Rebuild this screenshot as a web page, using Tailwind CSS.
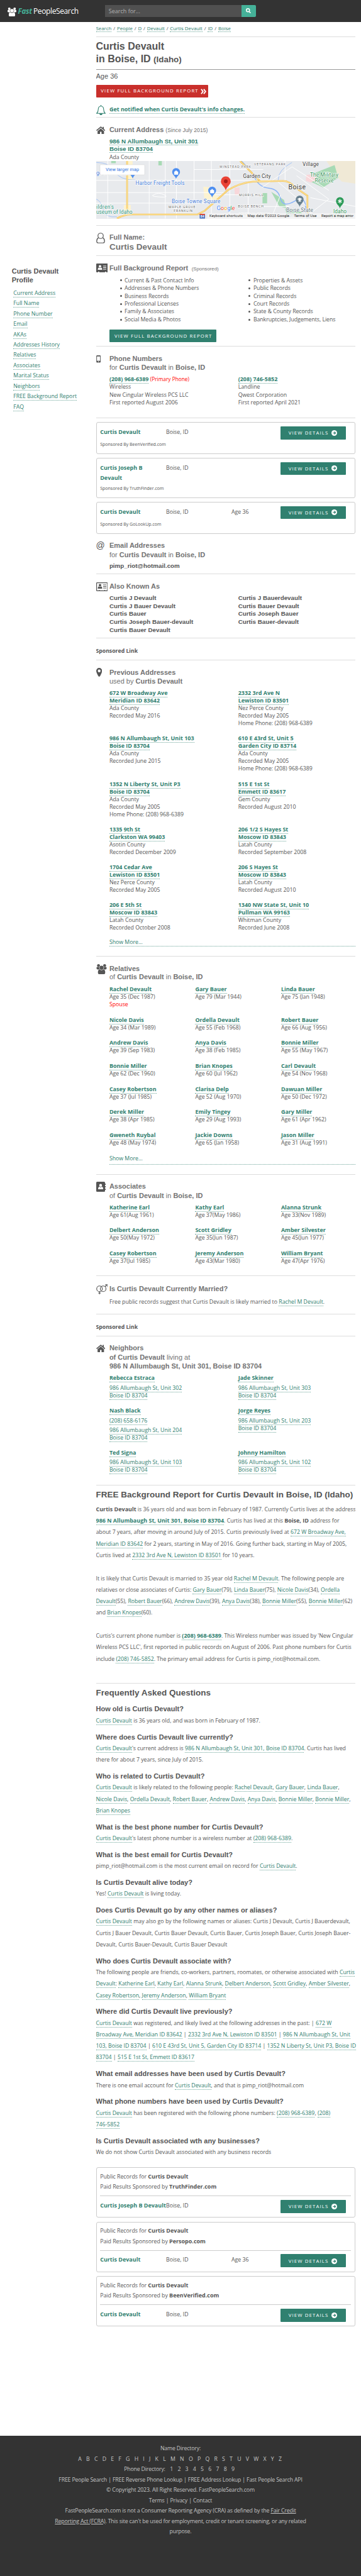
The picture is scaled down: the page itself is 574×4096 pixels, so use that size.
<!DOCTYPE html>
<html lang="en">
<head>
<meta charset="utf-8">
<title>Curtis Devault in Boise, ID (Idaho)</title>
<script src="https://cdn.jsdelivr.net/npm/@tailwindcss/browser@4"></script>
</head>
<body class="bg-white h-[4096px] overflow-hidden font-['Open_Sans','Noto_Sans',sans-serif] text-[8.75px] leading-[12px] text-[#555] whitespace-nowrap [&_b]:text-[8.970px]">
<svg class="hidden">
  <symbol id="arrow" viewBox="0 0 18 18"><circle cx="9" cy="9" r="9" fill="#fff"/><path d="M4.5 9h8M9 5l4 4-4 4" fill="none" stroke="#30806f" stroke-width="2.4"/></symbol>
  <symbol id="house" viewBox="0 0 24 20"><path d="M12 0 0 10l1.6 2L12 3.400 22.400 12 24 10l-4-3.400V1h-3v3.200zM12 5.200 3.500 12.200V20H10v-6h4v6h6.500v-7.800z" fill="#555"/></symbol>
  <symbol id="people" viewBox="0 0 28 28"><circle cx="5.500" cy="4" r="4"/><circle cx="22.500" cy="4" r="4"/><path d="M0 10q0-2 2-2h4q1.500 0 1.800 1.500Q7 13 9 15H3q-3 0-3-3zM28 10q0-2-2-2h-4q-1.500 0-1.800 1.500Q21 13 19 15h6q3 0 3-3z"/><circle cx="14" cy="10" r="5.600"/><path d="M4 25q-1-8 4-10.500Q11 17 14 17t6-2.500q5 2.500 4 10.500 0 3-3 3H7q-3 0-3-3z"/></symbol>
</svg>

<header class="h-[34.750px] bg-[#333] flex items-start">
  <div class="flex w-[167.300px] pl-[12px] pt-[11px]">
    <svg class="w-[14px] h-[14px] mt-[1px] fill-white"><use href="#people"/></svg>
    <span class="ml-[2.500px] w-[24.500px] text-[11.500px] leading-[14px] tracking-[-0.2px] font-bold italic text-[#45b198]">Fast</span>
    <span class="text-[12px] leading-[14px] tracking-[-0.380px] text-white">PeopleSearch</span>
  </div>
  <div class="mt-[8px] flex">
    <div class="w-[216.500px] h-[18.800px] bg-[#505050] pl-[5.500px] text-[9px] leading-[19px] text-[#b0b0b0]">Search for...</div>
    <div class="w-[23px] h-[18.800px] bg-[#45b198] rounded-r-[2px] flex items-center justify-center">
      <svg class="w-[8px] h-[8px]" viewBox="0 0 16 16" fill="none" stroke="#fff" stroke-width="3"><circle cx="6.500" cy="6.500" r="5"/><path d="m10 10.500 5 5"/></svg>
    </div>
  </div>
</header>

<div class="flex h-[3838.650px] [&_a]:text-[#30806f] [&_a]:border-b [&_a]:border-dotted [&_a]:border-[#30806f]/70">
<aside class="w-[152.500px] shrink-0 pl-[18.700px] pt-[389.500px]">
  <h3 class="font-['Liberation_Sans'] font-bold text-[11px] leading-[14.200px]">Curtis Devault<br>Profile</h3>
  <nav class="mt-[5.100px] pl-[2.600px] leading-[16.460px]">
    <div><a>Current Address</a></div><div><a>Full Name</a></div><div><a>Phone Number</a></div><div><a>Email</a></div><div><a>AKAs</a></div><div><a>Addresses History</a></div><div><a>Relatives</a></div><div><a>Associates</a></div><div><a>Marital Status</a></div><div><a>Neighbors</a></div><div><a>FREE Background Report</a></div><div><a>FAQ</a></div>
  </nav>
</aside>

<main class="w-[412.400px] shrink-0 [&_h2]:font-['Liberation_Sans'] [&_h2]:font-bold [&_h2]:text-[11px] [&_h2]:text-[#737373] [&>section]:border-b [&>section]:border-[#ddd] [&>section]:overflow-hidden">
  <section class="h-[23.850px] pt-[5.500px] text-[7.850px] leading-[10px] flex gap-[2.850px]"><span><a>Search</a></span><span>/</span><span><a>People</a></span><span>/</span><span><a>D</a></span><span>/</span><span><a>Devault</a></span><span>/</span><span><a>Curtis Devault</a></span><span>/</span><span><a>ID</a></span><span>/</span><span><a>Boise</a></span></section>

  <div class="h-[52.400px] pt-[5.200px] border-b border-[#999]">
    <h1 class="font-['Liberation_Sans'] font-bold text-[16px] leading-[20.450px]">Curtis Devault<br>in Boise, ID <span class="text-[13.400px]">(Idaho)</span></h1>
  </div>

  <section class="h-[75.700px] pt-[3.500px]">
    <div class="font-['Liberation_Sans'] text-[11px] leading-[14px]">Age 36</div>
    <div class="mt-[7px] w-[178.600px] h-[19.700px] pl-[7.800px] bg-[#c92f2b] rounded-[1px] text-white text-[7.800px] leading-[19.700px] tracking-[1.140px] flex items-center"><span class="w-[158.500px]">VIEW FULL BACKGROUND REPORT</span>
      <svg class="w-[9px] h-[9px]" viewBox="0 0 18 18" fill="none" stroke="#fff" stroke-width="4"><path d="m2 1.500 5.500 7.500L2 16.500M10 1.500 15.500 9 10 16.500"/></svg></div>
    <div class="mt-[12.300px] flex">
      <svg class="w-[15px] h-[16px] mr-[6.400px]" viewBox="0 0 30 32" fill="none" stroke="#30806f" stroke-width="2.200"><path d="M15 3.500c-6 0-8.500 4.500-8.500 10 0 8-1.500 9.500-5 13h27c-3.500-3.500-5-5-5-13 0-5.500-2.500-10-8.500-10zM15 0v4"/><path d="M11 28q4 6 8 0z" fill="#30806f"/></svg>
      <b class="leading-[14px]"><a>Get notified when Curtis Devault's info changes.</a></b>
    </div>
  </section>

  <section class="h-[172.500px] pt-[12.200px]">
    <div class="flex">
      <svg class="w-[14.500px] h-[12.200px] mt-[1.700px] mr-[6.900px]"><use href="#house"/></svg>
      <div class="h-[57.300px]">
        <h2 class="h-[14px] leading-[14px]">Current Address <span class="font-normal text-[8.700px]">(Since July 2015)</span></h2>
        <div class="mt-[6.350px] font-['Liberation_Sans'] font-bold text-[9.800px] leading-[11.900px]"><a>986 N Allumbaugh St, Unit 301</a><br><a>Boise ID 83704</a></div>
        <div class="mt-[1.200px]">Ada County</div>
      </div>
    </div>
    <svg class="block w-[412.400px] h-[91.500px] font-['Roboto']" viewBox="0 0 412.400 91.500">
      <rect width="413" height="92" fill="#e8eaed"/>
      <g transform="scale(.3662 .2334)" fill="none">
        <path d="M1000 0h126v155l-60-15-30-50z" fill="#f0e9d6"/>
        <path d="M928 95 1035 28 1051 115 985 180 915 130z" fill="#a8dab5"/>
        <path d="M912 95l38-8 10 40-30 20-20-12zM600 185l22-5v45l-20 10z" fill="#f8d7da"/>
        <path d="M722 218h20v70h-20zM760 210l55 55 10 55-30-10zM820 325l60 10 30 45h-80zM65 0h20v15H65zM270 0h15v30h-15z" fill="#a8dab5"/>
        <path d="M130 0h28v130h-25zM465 175l30 5 40 70-30 50-35-30zM120 300h30v70h-30z" fill="#fdf3d0"/>
        <g stroke="#8ab4f8" stroke-width="1.500"><path vector-effect="non-scaling-stroke" d="M630 0q40 60 60 120t60 65 50 70 60 20 50 50 20 67"/><path vector-effect="non-scaling-stroke" stroke-width=".7" d="M0 10q60 0 80 60t90 60M0 260q20 10 30 70t60 50M850 10q-60 50-60 120"/></g>
        <g stroke="#fff" stroke-width="1"><path vector-effect="non-scaling-stroke" d="M0 132h760M0 287h480M425 58h300M50 0v392M230 0v392M300 0v392M348 0v392M425 0v260M500 0v392M580 0v392M660 150v242M0 215h560M250 230q20-20 45 0t-20 15-25-15M500 230h220M620 310h220M720 180 850 40 1010 200M820 0v140M780 130 930 330M870 100 1010 260 900 392M1126 310 930 250M760 392l40-160"/></g>
        <g stroke="#f5c04a" stroke-width="2.600"><path vector-effect="non-scaling-stroke" d="M90 392q30-28 60-28h290l30-24L570 200q50-50 110-60l130-4q30 0 50 40l57 60v130M134 0v362M625 0l85 136"/></g>
        <g stroke="#fff3c4" stroke-width=".9"><path vector-effect="non-scaling-stroke" d="M90 392q30-28 60-28h290l30-24L570 200q50-50 110-60l130-4q30 0 50 40l57 60v130M134 0v362M625 0l85 136"/></g>
      </g>
      <g>
        <g fill="#4f8ff0"><path d="M127 28.800c-1-5-6.200-6.500-6.200-11.300a6.200 6.200 0 0 1 12.400 0c0 4.800-5.200 6.300-6.200 11.300zM184.300 58.300c-1-5-6.200-6.500-6.200-11.300a6.200 6.200 0 0 1 12.400 0c0 4.800-5.200 6.300-6.200 11.300zM58 28c-1-4-4-5-4-8h8c0 3-3 4-4 8z"/></g>
        <path d="M124.200 17h5.800v4.500h-5.800zM181.400 46.500h5.800V51h-5.800zM125.500 17q1.500-3.500 3 0M182.800 46.500q1.500-3.500 3 0" fill="#fff" stroke="#fff" stroke-width=".6"/>
        <path d="M323.500 73c-1-5-6.200-6.500-6.200-11.800a6.200 6.200 0 0 1 12.400 0c0 5.300-5.200 6.800-6.200 11.800z" fill="#68808f"/><path d="m319.500 60.500 4-2 4 2-4 2zM321.500 62.500v2h4v-2" fill="#fff"/>
        <path d="M387.500 75.500c-1-5-6.200-6.500-6.200-11.800a6.200 6.200 0 0 1 12.400 0c0 5.300-5.200 6.800-6.200 11.800z" fill="#2b9a57"/><path d="M387.500 60.500v7M384.500 62.300l6 3.500M390.500 62.300l-6 3.500" stroke="#fff" stroke-width="1.300"/>
        <path d="M206 47c-1.200-7-7.800-8.500-7.800-14.800a7.800 7.800 0 0 1 15.600 0C213.800 38.500 207.200 40 206 47z" fill="#ea4335"/><circle cx="206" cy="32.200" r="3" fill="#a51d18"/>
        <path d="M164.500 84h8.500v7.500h-8.500z" fill="#3f6cc0"/><path d="M164.500 84h8.500v2h-8.500z" fill="#d84a3f"/>
      </g>
      <g stroke="#fff" stroke-width="1.400" paint-order="stroke" stroke-linejoin="round" font-size="8.300">
        <g fill="#3f78d6"><text x="0" y="22">ge at Meridian</text><text x="62.500" y="38" textLength="78">Harbor Freight Tools</text><text x="120" y="67.500" textLength="77.500">Boise Towne Square</text></g>
        <g fill="#1f8f77"><text x="0" y="76" textLength="28">ildren's</text><text x="0" y="84.500" textLength="57.500">useum of Idaho</text></g>
        <g fill="#2f9156"><text x="340" y="25.500" textLength="45">The Military</text><text x="347.500" y="34" textLength="30">Reserve</text><text x="377" y="83.500" textLength="21">Idaho</text><text x="370" y="89.500" font-size="7" textLength="35">Botanical</text></g>
        <g fill="#63737d"><text x="302" y="81.500" textLength="43">Boise State</text><text x="305" y="89" textLength="36">University</text></g>
        <g fill="#333"><text x="328" y="7.500" textLength="26">Village</text><text x="233.500" y="27.500" textLength="44">Garden City</text><text x="305.500" y="45.500" font-size="10.500" textLength="27.500">Boise</text></g>
        <g fill="#666" font-size="5.200"><text x="196" y="11.500" textLength="50">WINSTEAD PARK</text><text x="251" y="7.300" textLength="50">VETERANS PARK</text><text x="227" y="56" textLength="38.500">MORRIS HILL</text><text x="225.500" y="73.600" textLength="40.500">BOISE BENCH</text><text x="226" y="87" textLength="50" fill="#aaa">CENTRAL BENCH</text><text x="115" y="75.500" textLength="42.500">MAPLE GROVE</text><text x="119" y="81" textLength="34">- FRANKLIN</text></g>
        <text x="165.800" y="90.300" font-size="5" fill="#fff" stroke="none" font-weight="700">84</text>
      </g>
      <rect x="6" y="6" width="71" height="16" rx="1" fill="#fff" stroke="#ccc" stroke-width=".4"/>
      <text x="15" y="16.500" font-size="7.300" fill="#2f74e0" textLength="53">View larger map</text>
      <text x="191.500" y="78" font-size="9.500" stroke="#fff" stroke-width="1.200" paint-order="stroke" textLength="29"><tspan fill="#4285f4">G</tspan><tspan fill="#ea4335">o</tspan><tspan fill="#f4b400">o</tspan><tspan fill="#4285f4">g</tspan><tspan fill="#34a853">l</tspan><tspan fill="#ea4335">e</tspan></text>
      <rect x="177" y="83" width="236" height="9" fill="#f5f5f5" fill-opacity=".8"/>
      <g font-size="5.900" fill="#222"><text x="180" y="89.500" textLength="53">Keyboard shortcuts</text><text x="240.500" y="89.500" textLength="66.500">Map data ©2023 Google</text><text x="314.500" y="89.500" textLength="36">Terms of Use</text><text x="358" y="89.500" textLength="51">Report a map error</text></g>
    </svg>
  </section>

  <section class="h-[47.400px] pt-[11.250px] flex">
    <svg class="w-[14px] h-[17px] mr-[7.400px] shrink-0" viewBox="0 0 28 34" fill="none" stroke="#555" stroke-width="2.400"><circle cx="14" cy="10" r="8.500"/><path d="M7.500 15.500Q1.500 19 1.500 27q0 5.500 5 5.500h15q5 0 5-5.500 0-8-6-11.500"/></svg>
    <div><h2 class="leading-[15.900px]">Full Name:</h2><div class="font-['Liberation_Sans'] font-bold text-[13.500px] leading-[14px] text-[#737373]">Curtis Devault</div></div>
  </section>

  <section class="h-[144.600px] pt-[12.600px] flex">
    <svg class="w-[18.500px] h-[14px] mr-[2.900px] shrink-0" viewBox="0 0 37 28"><path d="M2 0h33q2 0 2 2v24q0 2-2 2H32v-2h-4v2H10v-2H6v2H2q-2 0-2-2V2q0-2 2-2z" fill="#555"/><circle cx="12" cy="9" r="4" fill="#fff"/><path d="M5 20q0-7 4-7l3 2 3-2q4 0 4 7zM22 7h10v2H22zM22 12h10v2H22zM22 17h10v2H22z" fill="#fff"/></svg>
    <div class="w-[391px]">
      <h2 class="h-[14px] leading-[14px]">Full Background Report <span class="ml-[2.500px] font-normal text-[7.800px]">(Sponsored)</span></h2>
      <div class="mt-[6.500px] grid grid-cols-[204.800px_1fr] leading-[12.440px] [&_li]:flex [&_li]:items-center [&_li]:before:content-[''] [&_li]:before:w-[3px] [&_li]:before:h-[3px] [&_li]:before:rounded-full [&_li]:before:bg-[#555] [&_li]:before:mr-[4.500px] [&_li]:pl-[16.700px] [&_li]:tracking-[-0.050px]">
        <ul><li>Current &amp; Past Contact Info</li><li>Addresses &amp; Phone Numbers</li><li>Business Records</li><li>Professional Licenses</li><li>Family &amp; Associates</li><li>Social Media &amp; Photos</li></ul>
        <ul><li>Properties &amp; Assets</li><li>Public Records</li><li>Criminal Records</li><li>Court Records</li><li>State &amp; County Records</li><li>Bankruptcies, Judgements, Liens</li></ul>
      </div>
      <div class="mt-[10px] w-[170.400px] h-[20px] pl-[8px] bg-[#30806f] rounded-[1px] text-white text-[7.800px] leading-[20px] tracking-[1.140px]">VIEW FULL BACKGROUND REPORT</div>
    </div>
  </section>

  <section class="h-[114px] pt-[12.200px] flex">
    <svg class="w-[7.300px] h-[11.400px] mt-[2px] mr-[14.100px] shrink-0" viewBox="0 0 14 23"><rect width="14" height="23" rx="2.500" fill="#555"/><path d="M2 3.500h10v14H2z" fill="#fff"/><circle cx="7" cy="20.200" r="1.300" fill="#fff"/></svg>
    <div>
      <h2 class="leading-[14.100px]">Phone Numbers<br><span class="font-normal">for</span> Curtis Devault <span class="font-normal">in</span> Boise, ID</h2>
      <div class="mt-[5.400px] grid grid-cols-[204.800px_1fr] leading-[12.400px]">
        <div><b><a>(208) 968-6389</a></b> <span class="text-[#f00] text-[8.300px] leading-[10px]">(Primary Phone)</span><br>Wireless<br>New Cingular Wireless PCS LLC<br>First reported August 2006</div>
        <div><b><a>(208) 746-5852</a></b><br>Landline<br>Qwest Corporation<br>First reported April 2021</div>
      </div>
    </div>
  </section>

  <div class="mt-[6.300px] h-[50.300px] border border-[#ccc] rounded-[3px] px-[5.700px]">
    <div class="flex h-[28.400px] pt-[6.600px] leading-[16.450px]"><b class="w-[104.800px] text-[#30806f]">Curtis Devault</b><span class="w-[104px]">Boise, ID</span><span class="w-[77.900px]"></span>
      <div class="-mt-[1.200px] w-[103.700px] h-[20.700px] shrink-0 pl-[12.800px] flex items-center bg-[#30806f] rounded-[1px] text-white text-[7.800px] leading-[20.700px] tracking-[1.140px]"><span class="w-[68.200px]">VIEW DETAILS</span><svg class="w-[9px] h-[9px]"><use href="#arrow"/></svg></div></div>
    <div class="text-[7px]">Sponsored By BeenVerified.com</div>
  </div>
  <div class="mt-[6.350px] h-[63.750px] border border-[#ccc] rounded-[3px] px-[5.700px]">
    <div class="flex h-[41.900px] pt-[6.600px] leading-[16.450px]"><b class="w-[104.800px] text-[#30806f]">Curtis Joseph B<br>Devault</b><span class="w-[104px]">Boise, ID</span><span class="w-[77.900px]"></span>
      <div class="-mt-[1.200px] w-[103.700px] h-[20.700px] shrink-0 pl-[12.800px] flex items-center bg-[#30806f] rounded-[1px] text-white text-[7.800px] leading-[20.700px] tracking-[1.140px]"><span class="w-[68.200px]">VIEW DETAILS</span><svg class="w-[9px] h-[9px]"><use href="#arrow"/></svg></div></div>
    <div class="text-[7px]">Sponsored By TruthFinder.com</div>
  </div>
  <div class="mt-[6.400px] h-[50.300px] border border-[#ccc] rounded-[3px] px-[5.700px]">
    <div class="flex h-[28.400px] pt-[6.600px] leading-[16.450px]"><b class="w-[104.800px] text-[#30806f]">Curtis Devault</b><span class="w-[104px]">Boise, ID</span><span class="w-[77.900px]">Age 36</span>
      <div class="-mt-[1.200px] w-[103.700px] h-[20.700px] shrink-0 pl-[12.800px] flex items-center bg-[#30806f] rounded-[1px] text-white text-[7.800px] leading-[20.700px] tracking-[1.140px]"><span class="w-[68.200px]">VIEW DETAILS</span><svg class="w-[9px] h-[9px]"><use href="#arrow"/></svg></div></div>
    <div class="text-[7px]">Sponsored By GoLookUp.com</div>
  </div>

  <section class="h-[64.600px] pt-[11.200px] flex">
    <div class="w-[21.400px] font-['Liberation_Sans'] text-[14px] leading-[15px]">@</div>
    <div><h2 class="leading-[14.900px]">Email Addresses<br><span class="font-normal">for</span> Curtis Devault <span class="font-normal">in</span> Boise, ID</h2>
      <div class="mt-[3.400px] font-['Liberation_Sans'] font-bold text-[9.800px] leading-[14px]">pimp_riot@hotmail.com</div></div>
  </section>

  <section class="h-[102px] pt-[12.300px] flex">
    <svg class="w-[18.500px] h-[14px] mt-[0.500px] mr-[2.900px] shrink-0" viewBox="0 0 37 28"><rect x="1.200" y="1.200" width="34.600" height="25.600" rx="1.500" fill="none" stroke="#555" stroke-width="2.400"/><circle cx="12" cy="9" r="4" fill="#555"/><path d="M5 20q0-7 4-7l3 2 3-2q4 0 4 7zM22 7h10v2H22zM22 12h10v2H22zM22 17h10v2H22zM9 24h2v3H9zM26 24h2v3h-2z" fill="#555"/></svg>
    <div><h2 class="leading-[14px]">Also Known As</h2>
      <div class="mt-[5.400px] grid grid-cols-[204.800px_1fr] font-['Liberation_Sans'] font-bold text-[9.800px] leading-[12.680px]">
        <div>Curtis J Devault<br>Curtis J Bauer Devault<br>Curtis Bauer<br>Curtis Joseph Bauer-devault<br>Curtis Bauer Devault</div>
        <div>Curtis J Bauerdevault<br>Curtis Bauer Devault<br>Curtis Joseph Bauer<br>Curtis Bauer-devault</div>
      </div></div>
  </section>

  <section class="h-[35.200px] pt-[14.200px] font-bold text-[8.700px]">Sponsored Link</section>

  <section class="h-[470.600px] pt-[11.200px] flex">
    <svg class="w-[9.400px] h-[14px] mt-[0.800px] mr-[12px] shrink-0" viewBox="0 0 19 28"><path fill-rule="evenodd" d="M9.500 0A9.300 9.300 0 0 1 19 9.500Q19 14 13 25q-1.500 3-3.500 3T6 25Q0 14 0 9.500A9.300 9.300 0 0 1 9.500 0zm0 5a4.500 4.500 0 1 0 0 9 4.500 4.500 0 0 0 0-9z" fill="#555"/></svg>
    <div class="w-[391px]">
      <h2 class="leading-[14.900px]">Previous Addresses<br><span class="font-normal">used by</span> Curtis Devault</h2>
      <div class="mt-[4.700px] grid grid-cols-[204.800px_1fr] grid-rows-[72.250px_72.250px_72.250px_60.200px_60.200px_59.300px] leading-[12.040px]">
        <div><b><a>672 W Broadway Ave</a><br><a>Meridian ID 83642</a></b><br>Ada County<br>Recorded May 2016</div>
        <div><b><a>2332 3rd Ave N</a><br><a>Lewiston ID 83501</a></b><br>Nez Perce County<br>Recorded May 2005<br>Home Phone: (208) 968-6389</div>
        <div><b><a>986 N Allumbaugh St, Unit 103</a><br><a>Boise ID 83704</a></b><br>Ada County<br>Recorded June 2015</div>
        <div><b><a>610 E 43rd St, Unit 5</a><br><a>Garden City ID 83714</a></b><br>Ada County<br>Recorded May 2005<br>Home Phone: (208) 968-6389</div>
        <div><b><a>1352 N Liberty St, Unit P3</a><br><a>Boise ID 83704</a></b><br>Ada County<br>Recorded May 2005<br>Home Phone: (208) 968-6389</div>
        <div><b><a>515 E 1st St</a><br><a>Emmett ID 83617</a></b><br>Gem County<br>Recorded August 2010</div>
        <div><b><a>1335 9th St</a><br><a>Clarkston WA 99403</a></b><br>Asotin County<br>Recorded December 2009</div>
        <div><b><a>206 1/2 S Hayes St</a><br><a>Moscow ID 83843</a></b><br>Latah County<br>Recorded September 2008</div>
        <div><b><a>1704 Cedar Ave</a><br><a>Lewiston ID 83501</a></b><br>Nez Perce County<br>Recorded May 2005</div>
        <div><b><a>206 S Hayes St</a><br><a>Moscow ID 83843</a></b><br>Latah County<br>Recorded August 2010</div>
        <div><b><a>206 E 5th St</a><br><a>Moscow ID 83843</a></b><br>Latah County<br>Recorded October 2008</div>
        <div><b><a>1340 NW State St, Unit 10</a><br><a>Pullman WA 99163</a></b><br>Whitman County<br>Recorded June 2008</div>
      </div>
      <a class="block h-[12.600px]">Show More...</a>
    </div>
  </section>

  <section class="h-[346.800px] pt-[12.600px] flex">
    <svg class="w-[17px] h-[16px] -mt-[0.500px] mr-[4.400px] shrink-0 fill-[#555]"><use href="#people"/></svg>
    <div class="w-[391px]">
      <h2 class="leading-[13.900px]">Relatives<br><span class="font-normal">of</span> Curtis Devault <span class="font-normal">in</span> Boise, ID</h2>
      <div class="mt-[5.900px] grid grid-cols-[136.500px_136.500px_1fr] grid-rows-[48.700px_36.600px_36.600px_36.600px_36.600px_36.600px_36.600px]">
        <div><b><a>Rachel Devault</a></b><br>Age 35 (Dec 1987)<br><span class="text-[#f00]">Spouse</span></div><div><b><a>Gary Bauer</a></b><br>Age 79 (Mar 1944)</div><div><b><a>Linda Bauer</a></b><br>Age 75 (Jan 1948)</div>
        <div><b><a>Nicole Davis</a></b><br>Age 34 (Mar 1989)</div><div><b><a>Ordella Devault</a></b><br>Age 55 (Feb 1968)</div><div><b><a>Robert Bauer</a></b><br>Age 66 (Aug 1956)</div>
        <div><b><a>Andrew Davis</a></b><br>Age 39 (Sep 1983)</div><div><b><a>Anya Davis</a></b><br>Age 38 (Feb 1985)</div><div><b><a>Bonnie Miller</a></b><br>Age 55 (May 1967)</div>
        <div><b><a>Bonnie Miller</a></b><br>Age 62 (Dec 1960)</div><div><b><a>Brian Knopes</a></b><br>Age 60 (Jul 1962)</div><div><b><a>Carl Devault</a></b><br>Age 54 (Nov 1968)</div>
        <div><b><a>Casey Robertson</a></b><br>Age 37 (Jul 1985)</div><div><b><a>Clarisa Delp</a></b><br>Age 52 (Aug 1970)</div><div><b><a>Dawuan Miller</a></b><br>Age 50 (Dec 1972)</div>
        <div><b><a>Derek Miller</a></b><br>Age 38 (Apr 1985)</div><div><b><a>Emily Tingey</a></b><br>Age 29 (Aug 1993)</div><div><b><a>Gary Miller</a></b><br>Age 61 (Apr 1962)</div>
        <div><b><a>Gweneth Ruybal</a></b><br>Age 48 (May 1974)</div><div><b><a>Jackie Downs</a></b><br>Age 65 (Jan 1958)</div><div><b><a>Jason Miller</a></b><br>Age 31 (Aug 1991)</div>
      </div>
      <a class="block h-[16.200px] leading-[14.600px]">Show More...</a>
    </div>
  </section>

  <section class="h-[161.600px] pt-[11.400px] flex">
    <svg class="w-[15px] h-[16px] mr-[6.400px] shrink-0" viewBox="0 0 30 32"><path d="M3 0h22q3 0 3 3v26q0 3-3 3H3q-3 0-3-3V3q0-3 3-3z" fill="#555"/><path d="M28 6h2v4h-2zM28 14h2v4h-2zM28 22h2v4h-2z" fill="#555"/><circle cx="14" cy="11.500" r="4.500" fill="#fff"/><path d="M6 24q0-8 4.500-8l3.500 2 3.500-2q4.500 0 4.500 8z" fill="#fff"/></svg>
    <div>
      <h2 class="leading-[14.800px]">Associates<br><span class="font-normal">of</span> Curtis Devault <span class="font-normal">in</span> Boise, ID</h2>
      <div class="mt-[5.100px] grid grid-cols-[136.500px_136.500px_1fr] auto-rows-[36.500px]">
        <div><b><a>Katherine Earl</a></b><br>Age 61(Aug 1961)</div><div><b><a>Kathy Earl</a></b><br>Age 37(May 1986)</div><div><b><a>Alanna Strunk</a></b><br>Age 33(Nov 1989)</div>
        <div><b><a>Delbert Anderson</a></b><br>Age 50(May 1972)</div><div><b><a>Scott Gridley</a></b><br>Age 35(Jun 1987)</div><div><b><a>Amber Silvester</a></b><br>Age 45(Jun 1977)</div>
        <div><b><a>Casey Robertson</a></b><br>Age 37(Jul 1985)</div><div><b><a>Jeremy Anderson</a></b><br>Age 43(Mar 1980)</div><div><b><a>William Bryant</a></b><br>Age 47(Apr 1976)</div>
      </div>
    </div>
  </section>

  <section class="h-[60.300px] pt-[12.300px] flex">
    <svg class="w-[18.500px] h-[16px] mr-[2.900px] shrink-0" viewBox="0 0 37 32" fill="none" stroke="#555" stroke-width="2.300"><circle cx="10.500" cy="14.500" r="9"/><circle cx="22" cy="14.500" r="9"/><path d="M10.500 23.500V32M6.500 28h8M28 8l7-7M28.500 1.500H36V9"/></svg>
    <div><h2 class="leading-[14px]">Is Curtis Devault Currently Married?</h2><p class="mt-[8.200px]">Free public records suggest that Curtis Devault is likely married to <a>Rachel M Devault</a>.</p></div>
  </section>

  <section class="h-[35.500px] pt-[14.400px] font-bold text-[8.700px]">Sponsored Link</section>

  <section class="h-[237.100px] pt-[11.300px] flex">
    <svg class="w-[14.500px] h-[12px] mt-[1.900px] mr-[6.900px] shrink-0"><use href="#house"/></svg>
    <div>
      <h2 class="leading-[14.400px]">Neighbors<br>of Curtis Devault <span class="font-normal">living at</span><br>986 N Allumbaugh St, Unit 301, Boise ID 83704</h2>
      <div class="mt-[5.500px] grid grid-cols-[204.800px_1fr] grid-rows-[52.100px_66.700px_50px] [&_p]:mt-[3.200px] leading-[12.200px]">
        <div><b><a>Rebecca Estraca</a></b><p><a>986 Allumbaugh St, Unit 302</a><br><a>Boise ID 83704</a></p></div>
        <div><b><a>Jade Skinner</a></b><p><a>986 Allumbaugh St, Unit 303</a><br><a>Boise ID 83704</a></p></div>
        <div><b><a>Nash Black</a></b><p><a>(208) 658-6176</a></p><p><a>986 Allumbaugh St, Unit 204</a><br><a>Boise ID 83704</a></p></div>
        <div><b><a>Jorge Reyes</a></b><p><a>986 Allumbaugh St, Unit 203</a><br><a>Boise ID 83704</a></p></div>
        <div><b><a>Ted Signa</a></b><p><a>986 Allumbaugh St, Unit 103</a><br><a>Boise ID 83704</a></p></div>
        <div><b><a>Johnny Hamilton</a></b><p><a>986 Allumbaugh St, Unit 102</a><br><a>Boise ID 83704</a></p></div>
      </div>
    </div>
  </section>

  <section class="h-[314.900px] pt-[7px] leading-[18.290px]">
    <h3 class="font-['Liberation_Sans'] font-bold text-[13.500px] leading-[16px] mb-[5.600px]">FREE Background Report for Curtis Devault in Boise, ID (Idaho)</h3>
    <p><b>Curtis Devault</b> is 36 years old and was born in February of 1987. Currently Curtis lives at the address<br>
    <b><a>986 N Allumbaugh St, Unit 301, Boise ID 83704</a></b>. Curtis has lived at this <b>Boise, ID</b> address for<br>
    about 7 years, after moving in around July of 2015. Curtis previously lived at <a>672 W Broadway Ave,</a><br>
    <a>Meridian ID 83642</a> for 2 years, starting in May of 2016. Going further back, starting in May of 2005,<br>
    Curtis lived at <a>2332 3rd Ave N, Lewiston ID 83501</a> for 10 years.</p>
    <p class="mt-[18.290px]">It is likely that Curtis Devault is married to 35 year old <a>Rachel M Devault</a>. The following people are<br>
    relatives or close associates of Curtis: <a>Gary Bauer</a>(79), <a>Linda Bauer</a>(75), <a>Nicole Davis</a>(34), <a>Ordella</a><br>
    <a>Devault</a>(55), <a>Robert Bauer</a>(66), <a>Andrew Davis</a>(39), <a>Anya Davis</a>(38), <a>Bonnie Miller</a>(55), <a>Bonnie Miller</a>(62)<br>
    and <a>Brian Knopes</a>(60).</p>
    <p class="mt-[18.290px]">Curtis's current phone number is <b><a>(208) 968-6389</a></b>. This Wireless number was issued by 'New Cingular<br>
    Wireless PCS LLC', first reported in public records on August of 2006. Past phone numbers for Curtis<br>
    include <a>(208) 746-5852</a>. The primary email address for Curtis is pimp_riot@hotmail.com.</p>
  </section>

  <div class="pt-[7px] leading-[18.290px] [&_h4]:font-['Liberation_Sans'] [&_h4]:font-bold [&_h4]:text-[11px] [&_h4]:leading-[18.300px] [&_p]:mb-[7.500px]">
    <h3 class="font-['Liberation_Sans'] font-bold text-[13.500px] leading-[16px] mb-[8.400px]">Frequently Asked Questions</h3>
    <h4>How old is Curtis Devault?</h4>
    <p><a>Curtis Devault</a> is 36 years old, and was born in February of 1987.</p>
    <h4>Where does Curtis Devault live currently?</h4>
    <p><a>Curtis Devault</a>'s current address is <a>986 N Allumbaugh St, Unit 301, Boise ID 83704</a>. Curtis has lived<br>there for about 7 years, since July of 2015.</p>
    <h4>Who is related to Curtis Devault?</h4>
    <p><a>Curtis Devault</a> is likely related to the following people: <a>Rachel Devault</a>, <a>Gary Bauer</a>, <a>Linda Bauer</a>,<br><a>Nicole Davis</a>, <a>Ordella Devault</a>, <a>Robert Bauer</a>, <a>Andrew Davis</a>, <a>Anya Davis</a>, <a>Bonnie Miller</a>, <a>Bonnie Miller</a>,<br><a>Brian Knopes</a></p>
    <h4>What is the best phone number for Curtis Devault?</h4>
    <p><a>Curtis Devault</a>'s latest phone number is a wireless number at <a>(208) 968-6389</a>.</p>
    <h4>What is the best email for Curtis Devault?</h4>
    <p>pimp_riot@hotmail.com is the most current email on record for <a>Curtis Devault</a>.</p>
    <h4>Is Curtis Devault alive today?</h4>
    <p>Yes! <a>Curtis Devault</a> is living today.</p>
    <h4>Does Curtis Devault go by any other names or aliases?</h4>
    <p><a>Curtis Devault</a> may also go by the following names or aliases: Curtis J Devault, Curtis J Bauerdevault,<br>Curtis J Bauer Devault, Curtis Bauer Devault, Curtis Bauer, Curtis Joseph Bauer, Curtis Joseph Bauer-<br>Devault, Curtis Bauer-Devault, Curtis Bauer Devault</p>
    <h4>Who does Curtis Devault associate with?</h4>
    <p>The following people are friends, co-workers, partners, roomates, or otherwise associated with <a>Curtis</a><br><a>Devault</a>: <a>Katherine Earl</a>, <a>Kathy Earl</a>, <a>Alanna Strunk</a>, <a>Delbert Anderson</a>, <a>Scott Gridley</a>, <a>Amber Silvester</a>,<br><a>Casey Robertson</a>, <a>Jeremy Anderson</a>, <a>William Bryant</a></p>
    <h4>Where did Curtis Devault live previously?</h4>
    <p><a>Curtis Devault</a> was registered, and likely lived at the following addresses in the past: | <a>672 W</a><br><a>Broadway Ave, Meridian ID 83642</a> | <a>2332 3rd Ave N, Lewiston ID 83501</a> | <a>986 N Allumbaugh St, Unit</a><br><a>103, Boise ID 83704</a> | <a>610 E 43rd St, Unit 5, Garden City ID 83714</a> | <a>1352 N Liberty St, Unit P3, Boise ID</a><br><a>83704</a> | <a>515 E 1st St, Emmett ID 83617</a></p>
    <h4>What email addresses have been used by Curtis Devault?</h4>
    <p>There is one email account for <a>Curtis Devault</a>, and that is pimp_riot@hotmail.com</p>
    <h4>What phone numbers have been used by Curtis Devault?</h4>
    <p><a>Curtis Devault</a> has been registered with the following phone numbers: <a>(208) 968-6389</a>, <a>(208)</a><br><a>746-5852</a></p>
    <h4>Is Curtis Devault associated wth any businesses?</h4>
    <p>We do not show Curtis Devault associated with any business records</p>
  </div>

  <div class="mt-[14.800px] flex flex-col gap-[6.560px] leading-[16.500px]">
    <div class="h-[80px] border border-[#ccc] rounded-[3px] px-[5.700px] pt-[5.400px]">
      <div>Public Records for <b>Curtis Devault</b></div><div>Paid Results Sponsored by <b>TruthFinder.com</b></div>
      <div class="mt-[5.700px] border-t border-[#ccc] pt-[6.400px] flex"><b class="w-[104.800px] text-[#30806f]">Curtis Joseph B Devault</b><span class="w-[104px]">Boise, ID</span><span class="w-[77.900px]"></span>
        <div class="-mt-[1px] w-[103.700px] h-[21.300px] shrink-0 pl-[12.800px] flex items-center bg-[#30806f] rounded-[1px] text-white text-[7.800px] tracking-[1.140px]"><span class="w-[68.200px]">VIEW DETAILS</span><svg class="w-[9px] h-[9px] mt-[1px]"><use href="#arrow"/></svg></div></div>
    </div>
    <div class="h-[80px] border border-[#ccc] rounded-[3px] px-[5.700px] pt-[5.400px]">
      <div>Public Records for <b>Curtis Devault</b></div><div>Paid Results Sponsored by <b>Persopo.com</b></div>
      <div class="mt-[5.700px] border-t border-[#ccc] pt-[6.400px] flex"><b class="w-[104.800px] text-[#30806f]">Curtis Devault</b><span class="w-[104px]">Boise, ID</span><span class="w-[77.900px]">Age 36</span>
        <div class="-mt-[1px] w-[103.700px] h-[21.300px] shrink-0 pl-[12.800px] flex items-center bg-[#30806f] rounded-[1px] text-white text-[7.800px] tracking-[1.140px]"><span class="w-[68.200px]">VIEW DETAILS</span><svg class="w-[9px] h-[9px] mt-[1px]"><use href="#arrow"/></svg></div></div>
    </div>
    <div class="h-[80px] border border-[#ccc] rounded-[3px] px-[5.700px] pt-[5.400px]">
      <div>Public Records for <b>Curtis Devault</b></div><div>Paid Results Sponsored by <b>BeenVerified.com</b></div>
      <div class="mt-[5.700px] border-t border-[#ccc] pt-[6.400px] flex"><b class="w-[104.800px] text-[#30806f]">Curtis Devault</b><span class="w-[104px]">Boise, ID</span><span class="w-[77.900px]"></span>
        <div class="-mt-[1px] w-[103.700px] h-[21.300px] shrink-0 pl-[12.800px] flex items-center bg-[#30806f] rounded-[1px] text-white text-[7.800px] tracking-[1.140px]"><span class="w-[68.200px]">VIEW DETAILS</span><svg class="w-[9px] h-[9px] mt-[1px]"><use href="#arrow"/></svg></div></div>
    </div>
  </div>
</main>
</div>

<footer class="h-[222.600px] bg-[#333] pt-[12.100px] text-center leading-[16.460px] tracking-[-0.170px] text-[#c4c4c4]">
  <div>Name Directory:</div>
  <div class="flex justify-center gap-[7.400px] pr-[2px]"><span>A</span><span>B</span><span>C</span><span>D</span><span>E</span><span>F</span><span>G</span><span>H</span><span>I</span><span>J</span><span>K</span><span>L</span><span>M</span><span>N</span><span>O</span><span>P</span><span>Q</span><span>R</span><span>S</span><span>T</span><span>U</span><span>V</span><span>W</span><span>X</span><span>Y</span><span>Z</span></div>
  <div class="flex justify-center gap-[7.400px] pr-[4px]"><span>Phone Directory:</span><span>1</span><span>2</span><span>3</span><span>4</span><span>5</span><span>6</span><span>7</span><span>8</span><span>9</span></div>
  <div>FREE People Search | FREE Reverse Phone Lookup | FREE Address Lookup | Fast People Search API</div>
  <div>© Copyright 2023. All Right Reserved. FastPeopleSearch.com</div>
  <div>Terms | Privacy | Contact</div>
  <div>FastPeopleSearch.com is not a Consumer Reporting Agency (CRA) as defined by the <u>Fair Credit</u><br><u>Reporting Act (FCRA)</u>. This site can't be used for employment, credit or tenant screening, or any related<br>purpose.</div>
</footer>
</body>
</html>
